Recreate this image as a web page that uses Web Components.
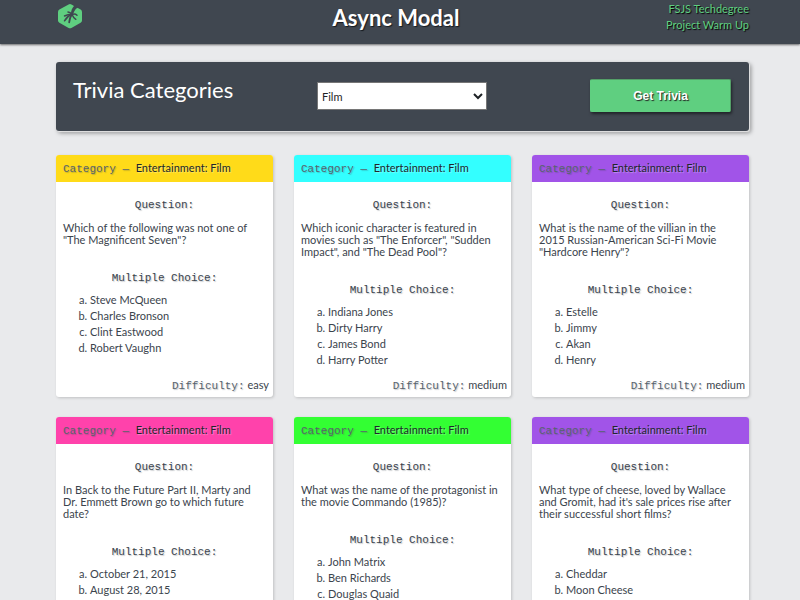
<!DOCTYPE html>
<html lang="en">
<head>
<meta charset="utf-8">
<title>Async Modal</title>
<style>
  body {
    margin: 0;
    background: #e9eaec;
    color: #3b444d;
    font: 11px/12px Lato, "Liberation Sans", sans-serif;
  }
  main { padding: 18px 51px 18px 56px; }
</style>
</head>
<body>
<site-header heading="Async Modal"></site-header>
<main>
  <trivia-picker heading="Trivia Categories"></trivia-picker>
  <card-grid>
    <trivia-card color="#ffdb19" category="Entertainment: Film" difficulty="easy">
      <span slot="question">Which of the following was not one of "The Magnificent Seven"?</span>
      <trivia-choices items="Steve McQueen|Charles Bronson|Clint Eastwood|Robert Vaughn"></trivia-choices>
    </trivia-card>
    <trivia-card color="#33ffff" category="Entertainment: Film" difficulty="medium">
      <span slot="question">Which iconic character is featured in movies such as "The Enforcer", "Sudden Impact", and "The Dead Pool"?</span>
      <trivia-choices items="Indiana Jones|Dirty Harry|James Bond|Harry Potter"></trivia-choices>
    </trivia-card>
    <trivia-card color="#a154e8" category="Entertainment: Film" difficulty="medium">
      <span slot="question">What is the name of the villian in the 2015 Russian-American Sci-Fi Movie "Hardcore Henry"?</span>
      <trivia-choices items="Estelle|Jimmy|Akan|Henry"></trivia-choices>
    </trivia-card>
    <trivia-card color="#ff42ab" category="Entertainment: Film">
      <span slot="question">In Back to the Future Part II, Marty and Dr. Emmett Brown go to which future date?</span>
      <trivia-choices items="October 21, 2015|August 28, 2015"></trivia-choices>
    </trivia-card>
    <trivia-card color="#33ff33" category="Entertainment: Film">
      <span slot="question">What was the name of the protagonist in the movie Commando (1985)?</span>
      <trivia-choices items="John Matrix|Ben Richards|Douglas Quaid"></trivia-choices>
    </trivia-card>
    <trivia-card color="#a154e8" category="Entertainment: Film">
      <span slot="question">What type of cheese, loved by Wallace and Gromit, had it's sale prices rise after their successful short films?</span>
      <trivia-choices items="Cheddar|Moon Cheese"></trivia-choices>
    </trivia-card>
  </card-grid>
</main>
<script>
  class BaseElement extends HTMLElement {
    connectedCallback() {
      if (this.shadowRoot) return;
      this.attachShadow({ mode: 'open' }).innerHTML = this.render();
    }
  }

  customElements.define('site-header', class extends BaseElement {
    render() {
      return `<style>
        :host {
          display: grid; grid-template-columns: 1fr auto 1fr; align-items: start;
          height: 44px; padding: 0 51px 0 57px;
          box-sizing: border-box; background: #404750;
          box-shadow: 0 1px 2px rgba(0,0,0,.55);
        }
        .logo { display: block; width: 26px; height: 26px; margin-top: 3px; }
        svg { display: block; width: 26px; height: 26px; }
        h1 { margin: 4px 0 0; padding-right: 14px; font-size: 22px; line-height: 28px; font-weight: 700; color: #fff; text-shadow: 1px 1px 1px #14191e; }
        .links { display: flex; flex-direction: column; align-items: flex-end; padding-top: 1px; }
        .links a { line-height: 16px; color: #5fcf80; text-decoration: none; text-shadow: 1px 1px 1px #000; }
      </style>
      <a class="logo" href="#" aria-label="Home"><svg viewBox="0 0 26 26">
        <path fill="#5fcf80" d="M11.6 1.4Q13 .6 14.4 1.4L23.6 6.6Q25 7.4 25 9V17.5Q25 19 23.6 19.8L14.4 25Q13 25.7 11.6 25L2.4 19.8Q1 19 1 17.5V9Q1 7.4 2.4 6.6Z"/>
        <path fill="#404750" d="M16 1L21.500 4.200Q17.500 6 16.300 10.800L14 11Q14 6 17 3Z"/>
        <g fill="none" stroke="#404750" stroke-width="1.500" stroke-linecap="round" stroke-linejoin="round">
          <path d="M15 11.500Q18 10.300 20 12.300"/>
          <path d="M15 11.500Q16.300 14.800 18.800 16.300"/>
          <path stroke-width="1.800" d="M15 11Q12.500 15 12.200 19.300"/>
          <path d="M14.800 11.300Q10 13.300 7.500 17.800"/>
          <path d="M14.500 11.300Q11 11.300 7.500 13"/>
          <path d="M14.500 11Q13.300 9.300 11 9"/>
        </g>
      </svg></a>
      <h1>${this.getAttribute('heading')}</h1>
      <nav class="links"><a href="#">FSJS Techdegree</a><a href="#">Project Warm Up</a></nav>`;
    }
  });

  customElements.define('trivia-picker', class extends BaseElement {
    render() {
      return `<style>
        :host { display: block; background: #404750; border-radius: 3px; box-shadow: 1px 1px 1px rgba(255,255,255,.7), 2px 2px 4px rgba(0,0,0,.4); }
        form { display: grid; grid-template-columns: 244px 170px 1fr; align-items: start; padding: 16px 18px 19px 17px; }
        label { font-size: 22px; line-height: 24px; color: #fff; }
        select {
          width: 100%; height: 28px; margin-top: 4px; padding: 0; box-sizing: border-box;
          background: #fff; color: #1e2226; border: 1px solid #767676; border-radius: 0; font: 11px Lato, sans-serif;
        }
        button {
          justify-self: end; width: 141px; height: 33px; margin-top: 1px; border: 1px solid; border-color: #549f68 #549f68 #5fcf80 #5fcf80; border-radius: 2px;
          background: #5fcf80; color: #fff; font: bold 12px "Liberation Sans", Arial, sans-serif;
          text-shadow: 1px 1px 1px #222; box-shadow: 1px 2px 3px rgba(0,0,0,.5);
        }
      </style>
      <form onsubmit="return false">
        <label for="category">${this.getAttribute('heading')}</label>
        <select id="category"><option>Film</option><option>Books</option><option>Music</option><option>Television</option></select>
        <button>Get Trivia</button>
      </form>`;
    }
  });

  customElements.define('card-grid', class extends BaseElement {
    render() {
      return `<style>
        :host { display: grid; grid-template-columns: repeat(3, 1fr); gap: 20px 21px; margin-top: 24px; }
        ::slotted(*) { min-width: 0; }
      </style><slot></slot>`;
    }
  });

  customElements.define('trivia-card', class extends BaseElement {
    render() {
      const difficulty = this.getAttribute('difficulty');
      return `<style>
        :host { display: flex; flex-direction: column; background: #fff; border-radius: 3px; overflow: hidden; box-shadow: 1px 1px 3px rgba(0,0,0,.18); }
        header { padding: 7px 7px 7px; background: ${this.getAttribute('color')}; color: #20262c; text-shadow: 1px 1px 1px rgba(255,255,255,.35); white-space: pre; }
        b { font: 11px/12px "Liberation Mono", "Courier New", monospace; color: #59636c; text-shadow: 1px 1px 1px rgba(60,70,80,.3); }
        h2 { margin: 0; font: 11px/12px "Liberation Mono", "Courier New", monospace; text-align: center; text-shadow: 1px 1px 1px rgba(60,70,80,.3); }
        .body { flex: 1; padding: 17px 7px 11px; }
        p { margin: 11px 0 26px; }
        footer { padding: 0 4px 5px; text-align: right; }
      </style>
      <header><b>Category — </b>${this.getAttribute('category')}</header>
      <div class="body">
        <h2>Question:</h2>
        <p><slot name="question"></slot></p>
        <h2>Multiple Choice:</h2>
        <slot></slot>
      </div>
      ${difficulty ? `<footer><b>Difficulty:</b> ${difficulty}</footer>` : ''}`;
    }
  });

  customElements.define('trivia-choices', class extends BaseElement {
    render() {
      const items = this.getAttribute('items').split('|').map(t => `<li>${t}</li>`).join('');
      return `<style>
        :host { display: block; margin-top: 8px; }
        ol { margin: 0; padding-left: 27px; list-style: lower-alpha; }
        li { line-height: 16px; }
      </style><ol>${items}</ol>`;
    }
  });
</script>
</body>
</html>
